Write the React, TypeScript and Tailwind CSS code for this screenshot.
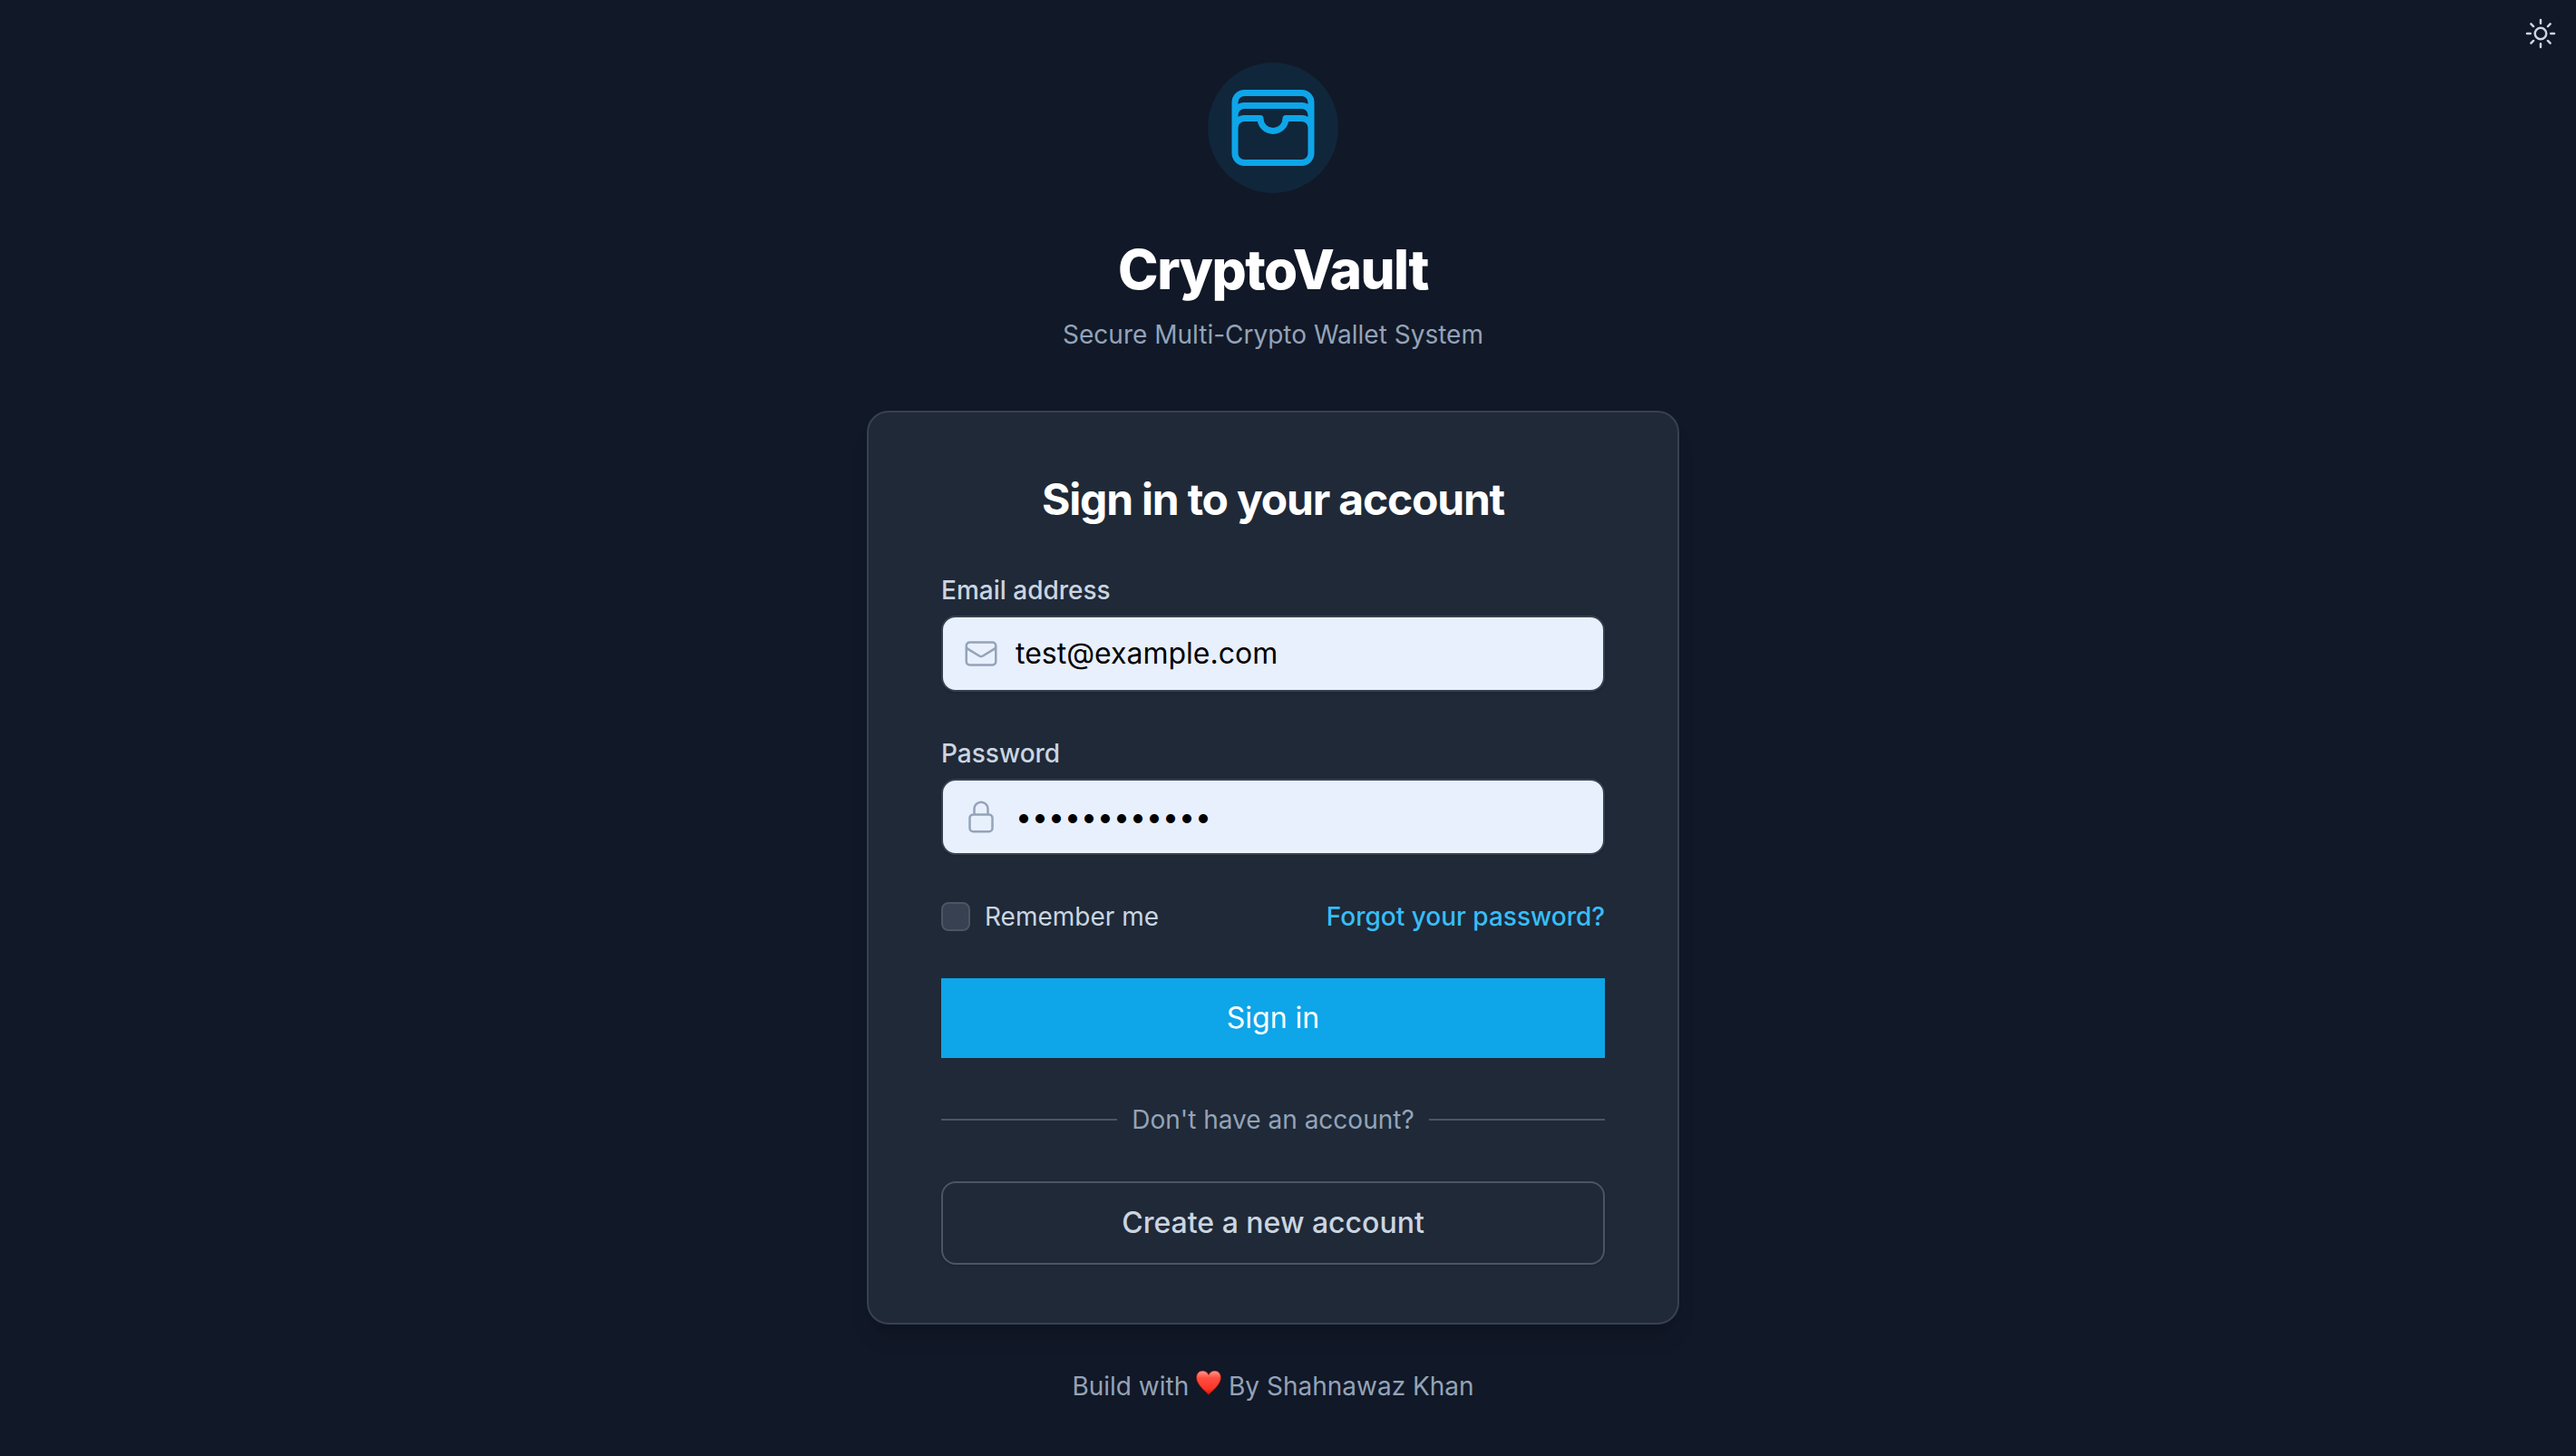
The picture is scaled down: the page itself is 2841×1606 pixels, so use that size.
import {
  HiOutlineEnvelope,
  HiOutlineLockClosed,
  HiOutlineSun,
  HiOutlineWallet,
} from 'react-icons/hi2';
import type { ComponentType, InputHTMLAttributes } from 'react';

type FieldProps = InputHTMLAttributes<HTMLInputElement> & {
  id: string;
  label: string;
  icon: ComponentType<{ className?: string }>;
};

function Field({ id, label, icon: Icon, ...input }: FieldProps) {
  return (
    <div>
      <label htmlFor={id} className="block text-[28px] leading-10 font-medium text-[#cbd5e1]">
        {label}
      </label>
      <div className="relative mt-2">
        <Icon className="pointer-events-none absolute top-1/2 left-6 size-10 -translate-y-1/2 text-[#94a3b8]" />
        <input
          id={id}
          className="block h-[84px] w-full rounded-2xl border-2 border-[#374151] bg-[#e8f0fe] pr-6 pb-0.5 pl-20 text-[32px] text-black shadow-sm outline-none"
          {...input}
        />
      </div>
    </div>
  );
}

function Heart() {
  return (
    <svg viewBox="0 0 26 26" className="mb-3 inline-block size-7" role="img" aria-label="love">
      <defs>
        <linearGradient id="heart" x1="0" y1="0" x2="0" y2="1">
          <stop offset="0" stopColor="#ff9a90" />
          <stop offset="0.3" stopColor="#ff4f42" />
          <stop offset="0.75" stopColor="#ff3527" />
          <stop offset="1" stopColor="#d01808" />
        </linearGradient>
      </defs>
      <path
        d="M13 25.5C10 22 0.5 15.5 0.5 7.8C0.5 3.6 3.4 1 6.8 1C9.6 1 12 2.6 13 5C14 2.6 16.4 1 19.2 1C22.6 1 25.5 3.6 25.5 7.8C25.5 15.5 16 22 13 25.5Z"
        fill="url(#heart)"
        stroke="#8f0f0a"
        strokeWidth="0.6"
      />
    </svg>
  );
}

export default function App() {
  return (
    <div className="relative flex min-h-screen flex-col items-center bg-[#111827] pt-[69px] pr-[33px] font-['Inter',sans-serif] antialiased">
      <button type="button" aria-label="Toggle theme" className="absolute top-[17px] right-[19px] text-[#cbd5e1]">
        <HiOutlineSun className="size-10" />
      </button>

      <header className="flex flex-col items-center">
        <div className="flex size-36 items-center justify-center rounded-full bg-[#0ea5e9]/10 text-[#0ea5e9]">
          <HiOutlineWallet className="size-28" />
        </div>
        <h1 className="mt-12 text-[60px] leading-[72px] font-extrabold tracking-tight text-white">CryptoVault</h1>
        <p className="mt-4 text-[28px] leading-10 text-[#94a3b8]">Secure Multi-Crypto Wallet System</p>
      </header>

      <main className="mt-16 w-full max-w-4xl rounded-3xl border-2 border-[#374151] bg-[#1f2937] px-20 py-16 shadow-xl">
        <h2 className="text-center text-[48px] leading-[64px] font-bold tracking-tight text-white">
          Sign in to your account
        </h2>
        <form className="mt-12 flex flex-col gap-12" onSubmit={(e) => e.preventDefault()}>
          <Field id="email" label="Email address" icon={HiOutlineEnvelope} type="email" defaultValue="test@example.com" />
          <Field id="password" label="Password" icon={HiOutlineLockClosed} type="password" defaultValue="password1234" />
          <div className="flex items-center justify-between text-[28px] leading-10">
            <label className="flex items-center gap-4 text-[#cbd5e1]">
              <input
                type="checkbox"
                className="size-8 appearance-none rounded-lg border-2 border-[#4b5563] bg-[#374151] checked:bg-[#0ea5e9]"
              />
              Remember me
            </label>
            <a href="#forgot" className="font-medium text-[#38bdf8]">
              Forgot your password?
            </a>
          </div>
          <button type="submit" className="h-[88px] w-full bg-[#0ea5e9] text-[32px] leading-[48px] text-white">
            Sign in
          </button>
        </form>
        <div className="mt-12 flex items-center gap-4 text-[28px] leading-10 text-[#94a3b8]">
          <span className="h-0.5 flex-1 bg-[#4b5563]" />
          Don't have an account?
          <span className="h-0.5 flex-1 bg-[#4b5563]" />
        </div>
        <button
          type="button"
          className="mt-12 h-[92px] w-full rounded-2xl border-2 border-[#4b5563] text-[32px] leading-[48px] font-medium text-[#cbd5e1] shadow-sm"
        >
          Create a new account
        </button>
      </main>

      <footer className="mt-12 text-[28px] leading-10 text-[#94a3b8]">
        Build with <Heart /> By Shahnawaz Khan
      </footer>
    </div>
  );
}
